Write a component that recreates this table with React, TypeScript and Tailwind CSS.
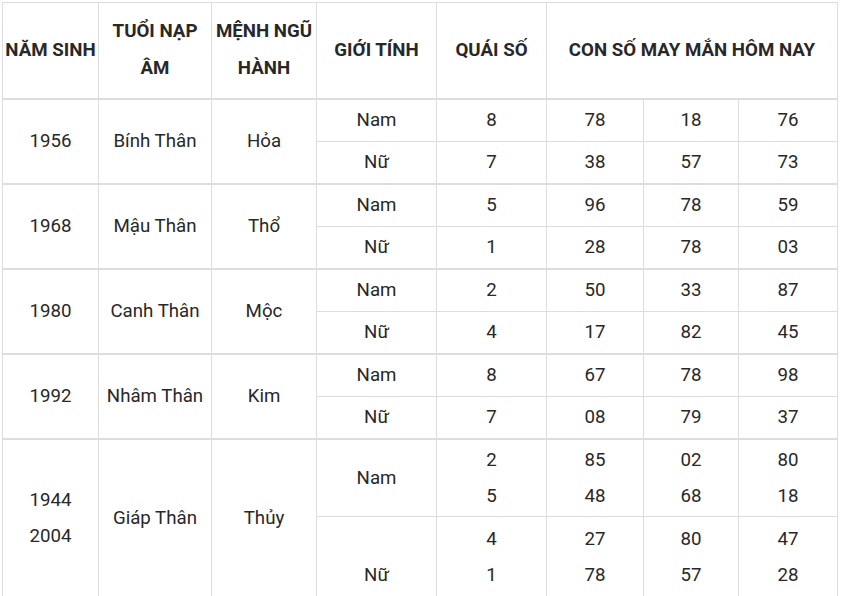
import React from 'react';

type Row = { g: string; q: string[]; n: string[][] };
type Group = { year: string[]; tuoi: string; menh: string; rows: Row[] };

const groups: Group[] = [
  { year: ['1956'], tuoi: 'Bính Thân', menh: 'Hỏa', rows: [
    { g: 'Nam', q: ['8'], n: [['78', '18', '76']] },
    { g: 'Nữ', q: ['7'], n: [['38', '57', '73']] },
  ] },
  { year: ['1968'], tuoi: 'Mậu Thân', menh: 'Thổ', rows: [
    { g: 'Nam', q: ['5'], n: [['96', '78', '59']] },
    { g: 'Nữ', q: ['1'], n: [['28', '78', '03']] },
  ] },
  { year: ['1980'], tuoi: 'Canh Thân', menh: 'Mộc', rows: [
    { g: 'Nam', q: ['2'], n: [['50', '33', '87']] },
    { g: 'Nữ', q: ['4'], n: [['17', '82', '45']] },
  ] },
  { year: ['1992'], tuoi: 'Nhâm Thân', menh: 'Kim', rows: [
    { g: 'Nam', q: ['8'], n: [['67', '78', '98']] },
    { g: 'Nữ', q: ['7'], n: [['08', '79', '37']] },
  ] },
  { year: ['1944', '2004'], tuoi: 'Giáp Thân', menh: 'Thủy', rows: [
    { g: 'Nam', q: ['2', '5'], n: [['85', '02', '80'], ['48', '68', '18']] },
    { g: '\u00a0\nNữ', q: ['4', '1'], n: [['27', '80', '47'], ['78', '57', '28']] },
  ] },
];

const td = 'border border-[#dddddd] px-[2px] py-[2px] text-center align-middle whitespace-pre-line';
const th = 'border border-[#dddddd] px-[2px] text-center align-middle font-bold leading-[37px]';

export default function App() {
  return (
    <div className="min-h-screen bg-white pl-[2px] pt-[2px] text-[18.7px] text-[#282828] leading-[36px]" style={{ fontFamily: 'Roboto, "Noto Sans", sans-serif' }}>
      <table className="w-[835px] table-fixed border-collapse">
        <colgroup>
          <col className="w-[96px]" />
          <col className="w-[113px]" />
          <col className="w-[105px]" />
          <col className="w-[120px]" />
          <col className="w-[110px]" />
          <col className="w-[97px]" />
          <col className="w-[95px]" />
          <col className="w-[99px]" />
        </colgroup>
        <thead>
          <tr className="h-[96px] border-b-2 border-[#dddddd]">
            <th className={th}>NĂM SINH</th>
            <th className={th}>TUỔI NẠP ÂM</th>
            <th className={th}>MỆNH NGŨ HÀNH</th>
            <th className={th}>GIỚI TÍNH</th>
            <th className={th}>QUÁI SỐ</th>
            <th className={th} colSpan={3}>CON SỐ MAY MẮN HÔM NAY</th>
          </tr>
        </thead>
        {groups.map((grp) => (
          <tbody key={grp.tuoi} className="border-t-2 border-[#dddddd]">
            {grp.rows.map((r, i) => (
              <tr
                key={i}
                className={grp.year.length > 1 ? (i === 0 ? 'h-[78px]' : 'h-[81px]') : 'h-[42.5px]'}
              >
                {i === 0 && (
                  <>
                    <td className={td} rowSpan={grp.rows.length}>{grp.year.join('\n')}</td>
                    <td className={td} rowSpan={grp.rows.length}>{grp.tuoi}</td>
                    <td className={td} rowSpan={grp.rows.length}>{grp.menh}</td>
                  </>
                )}
                <td className={td}>{r.g}</td>
                <td className={td}>{r.q.join('\n')}</td>
                {[0, 1, 2].map((c) => (
                  <td key={c} className={td}>{r.n.map((x) => x[c]).join('\n')}</td>
                ))}
              </tr>
            ))}
          </tbody>
        ))}
      </table>
    </div>
  );
}
